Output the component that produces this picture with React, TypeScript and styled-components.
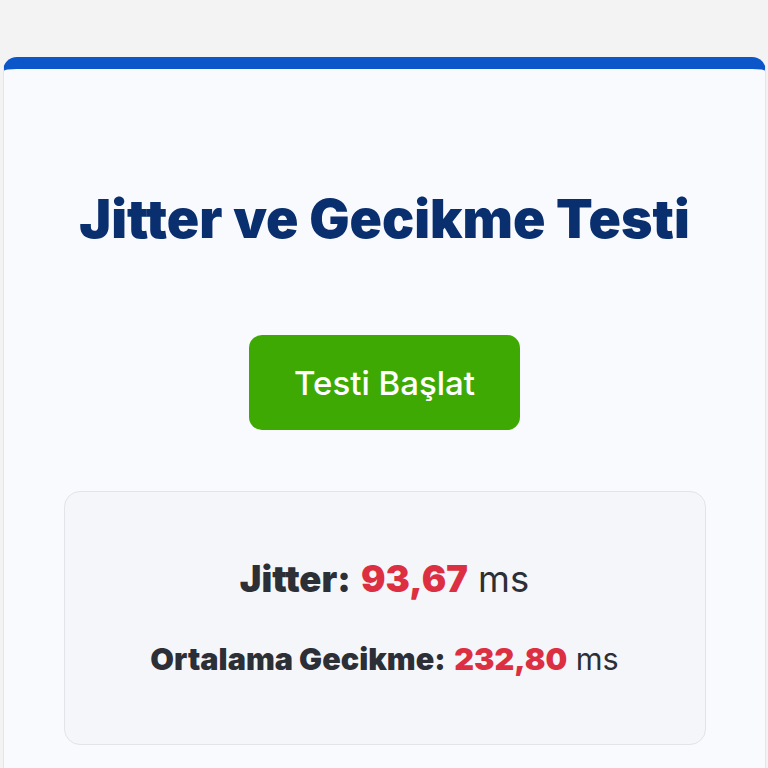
import React from "react";
import styled, { createGlobalStyle } from "styled-components";

const GlobalStyle = createGlobalStyle`
  html, body {
    margin: 0;
    padding: 0;
    background: #f3f3f4;
  }
  body {
    font-family: Inter, "Noto Sans", "Liberation Sans", sans-serif;
    overflow: hidden;
  }
  #root {
    padding: 57px 2px 0 3px;
  }
`;

const Card = styled.main`
  background: #f9fafd;
  border: 1px solid #e3e6ec;
  border-bottom: none;
  border-top: 12px solid #0b57c9;
  border-radius: 14px 14px 0 0;
  height: 711px;
  overflow: hidden;
  display: flex;
  flex-direction: column;
  align-items: center;
  padding: 116px 0 0;
  box-sizing: border-box;
`;

const Title = styled.h1`
  margin: 0;
  font-size: 53.5px;
  line-height: 68px;
  font-weight: 900;
  color: #0a2f6e;
`;

const StartButton = styled.button`
  margin-top: 82px;
  width: 271px;
  height: 95px;
  border: none;
  border-radius: 13px;
  background: #3fa903;
  color: #ffffff;
  font-family: inherit;
  font-size: 33px;
  font-weight: 500;
  cursor: pointer;
`;

const Results = styled.section`
  margin-top: 61px;
  width: 642px;
  box-sizing: border-box;
  border: 1px solid #e2e4e9;
  border-radius: 16px;
  background: #f5f6f9;
  padding: 64px 0 67px;
  display: flex;
  flex-direction: column;
  align-items: center;
  gap: 39px;
`;

const Line = styled.p<{ $size: number; $lh: number }>`
  margin: 0;
  font-size: ${(p) => p.$size}px;
  line-height: ${(p) => p.$lh}px;
  color: #2c2f36;
  white-space: nowrap;
`;

const Label = styled.strong`
  font-weight: 900;
`;

const Value = styled.strong`
  font-weight: 900;
  color: #dc2f42;
`;

const Unit = styled.span`
  font-weight: 400;
`;

export default function App() {
  return (
    <>
      <GlobalStyle />
      <Card>
        <Title>Jitter ve Gecikme Testi</Title>
        <StartButton type="button">Testi Başlat</StartButton>
        <Results>
          <Line $size={36.4} $lh={46}>
            <Label>Jitter:</Label> <Value>93,67</Value> <Unit>ms</Unit>
          </Line>
          <Line $size={30.6} $lh={36}>
            <Label>Ortalama Gecikme:</Label> <Value>232,80</Value> <Unit>ms</Unit>
          </Line>
        </Results>
      </Card>
    </>
  );
}
